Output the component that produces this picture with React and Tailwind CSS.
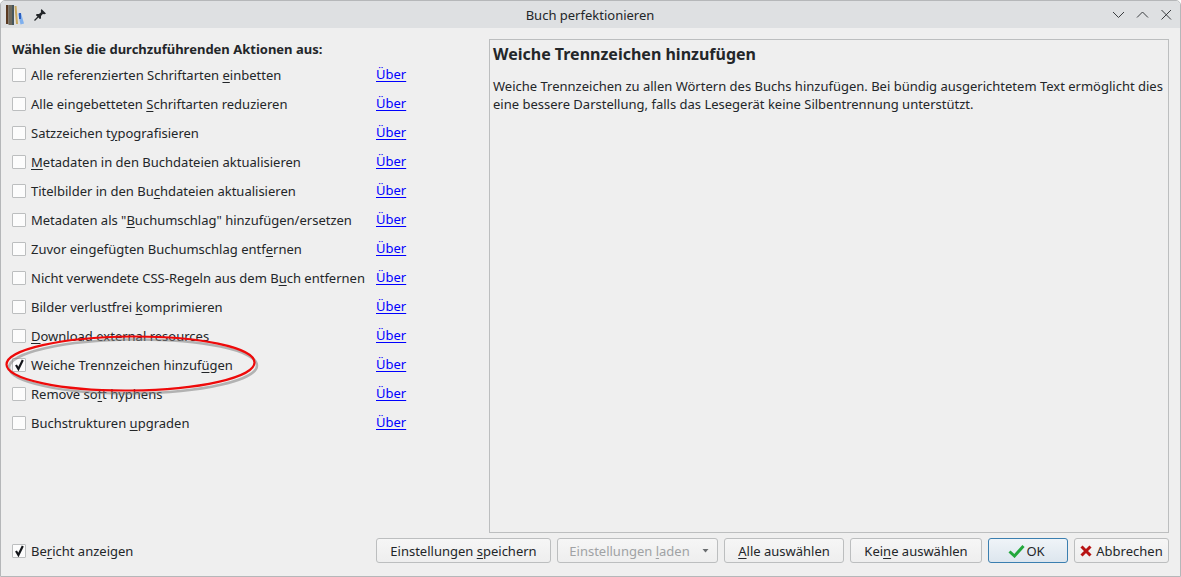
const aktionen = [
  ["Alle referenzierten Schriftarten ", "e", "inbetten"],
  ["Alle eingebetteten ", "S", "chriftarten reduzieren"],
  ["Satzzeichen t", "y", "pografisieren"],
  ["", "M", "etadaten in den Buchdateien aktualisieren"],
  ["Titelbilder in den Bu", "c", "hdateien aktualisieren"],
  ["Metadaten als \"", "B", "uchumschlag\" hinzufügen/ersetzen"],
  ["Zuvor eingefügten Buchumschlag entf", "e", "rnen"],
  ["Nicht verwendete CSS-Regeln aus dem B", "u", "ch entfernen"],
  ["Bilder verlustfrei ", "k", "omprimieren"],
  ["", "D", "ownload external resources"],
  ["Weiche Trennzeichen hinzuf", "ü", "gen", true],
  ["Remove so", "f", "t hyphens"],
  ["Buchstrukturen ", "u", "pgraden"],
];

function Mn({ a, k, b }) {
  return (
    <span>
      {a}
      <span className="underline underline-offset-2 decoration-1">{k}</span>
      {b}
    </span>
  );
}

function Check({ checked }) {
  return (
    <span className="flex h-[14px] w-[14px] shrink-0 items-center justify-center rounded-[1px] border border-[#bcbebf] bg-[#fcfcfc]">
      {checked && (
        <svg width="12" height="12" viewBox="0 0 12 12">
          <path d="M3 6 L5.4 10 L9.8 1" fill="none" stroke="#14161a" strokeWidth="2.2" />
        </svg>
      )}
    </span>
  );
}

function Btn({ children, className = "" }) {
  return (
    <div className={"flex h-[25px] items-center justify-center rounded-[3px] border border-[#bcbebf] bg-gradient-to-b from-[#f6f6f6] to-[#eeeeee] text-[#232629] " + className}>
      {children}
    </div>
  );
}

export default function App() {
  return (
    <div className="relative flex h-[577px] w-[1181px] flex-col overflow-hidden rounded-t-[5px] border border-[#b5b7b9] bg-[#efefef] font-['Noto_Sans',sans-serif] text-[13px] leading-[18px] text-[#232629]">
      <div className="flex h-[27px] shrink-0 items-center bg-[#dee0e2] pl-[4px] pr-[4px]">
        <svg width="20" height="24" viewBox="0 0 20 24">
          <rect x="1" y="2" width="2.5" height="19" fill="#5a3a22" />
          <rect x="3.5" y="2" width="3.5" height="20" fill="#6e6a5e" />
          <rect x="7" y="2" width="2" height="20" fill="#47565c" />
          <path d="M9.5 3 L11.5 3 L13 21 L11 21 Z" fill="#c9a860" />
          <path d="M13 10.5 L16 10 L19 20.5 L15.5 21.5 Z" fill="#7fb0ee" />
          <rect x="14" y="10" width="2" height="6" fill="#2c5fc0" />
        </svg>
        <svg className="ml-[8px]" width="14" height="14" viewBox="0 0 14 14">
          <path d="M8.5 1 L13 5.5 L11.5 6.2 L9.8 6 L8 8 L8 10.5 L6.8 11 L3 7.2 L3.5 6 L6 6 L8 4.2 L7.8 2.5 Z" fill="#232629" />
          <path d="M5 9 L1.5 12.5" stroke="#232629" strokeWidth="1.3" />
        </svg>
        <div className="flex-1 pl-[25px] text-center">Buch perfektionieren</div>
        <div className="flex items-center gap-[4px]">
          <svg width="20" height="20" viewBox="0 0 20 20"><path d="M5 7 L10.5 12.5 L16 7" fill="none" stroke="#3a3d40" /></svg>
          <svg width="20" height="20" viewBox="0 0 20 20"><path d="M5 12.5 L10.5 7 L16 12.5" fill="none" stroke="#3a3d40" /></svg>
          <svg width="20" height="20" viewBox="0 0 20 20"><path d="M5.5 5 L15 14.5 M15 5 L5.5 14.5" fill="none" stroke="#3a3d40" /></svg>
        </div>
      </div>

      <div className="flex min-h-0 flex-1 pl-[11px] pr-[11px] pt-[11px]">
        <div className="w-[477px] shrink-0">
          <div className="mt-[1px] font-bold leading-[18px]">Wählen Sie die durchzuführenden Aktionen aus:</div>
          <div className="mt-[2px] flex flex-col">
            {aktionen.map(([a, k, b, checked]) => (
              <div key={a + k + b} className="flex h-[29px] items-center">
                <Check checked={checked} />
                <span className="ml-[5px] w-[345px]"><Mn a={a} k={k} b={b} /></span>
                <span className="-mt-[2px] text-[#0000ff] underline underline-offset-2 decoration-1">Über</span>
              </div>
            ))}
          </div>
        </div>
        <div className="h-[494px] flex-1 border border-[#bcbebf] px-[3px] pt-[3px]">
          <div className="text-[16px] font-bold leading-[22px]">Weiche Trennzeichen hinzufügen</div>
          <p className="mt-[12px] leading-[18px]">
            Weiche Trennzeichen zu allen Wörtern des Buchs hinzufügen. Bei bündig ausgerichtetem Text ermöglicht dies eine bessere Darstellung, falls das Lesegerät keine Silbentrennung unterstützt.
          </p>
        </div>
      </div>

      <div className="flex h-[44px] shrink-0 items-start pl-[11px] pr-[11px] pt-[6px]">
        <div className="flex h-[25px] items-center">
          <Check checked />
          <span className="ml-[5px]"><Mn a="Be" k="r" b="icht anzeigen" /></span>
        </div>
        <div className="ml-auto flex gap-[6px]">
          <Btn className="w-[175px]"><Mn a="Einstellungen " k="s" b="peichern" /></Btn>
          <Btn className="w-[161px] !text-[#a0a2a4]">
            <span className="ml-[3px]"><Mn a="Einstellungen " k="l" b="aden" /></span>
            <svg className="ml-[12px]" width="7" height="4" viewBox="0 0 7 4"><path d="M0.5 0 L6.5 0 L3.5 3.5 Z" fill="#6a6d70" /></svg>
          </Btn>
          <Btn className="w-[120px]"><Mn a="" k="A" b="lle auswählen" /></Btn>
          <Btn className="w-[132px]"><Mn a="Kei" k="n" b="e auswählen" /></Btn>
          <Btn className="w-[80px] pr-[3px] !border-[#3b7fb0] !from-[#eff4f8] !to-[#dde6ee]">
            <svg width="17" height="14" viewBox="0 0 17 14"><path d="M1.5 7.5 L6.5 12 L15.5 2" fill="none" stroke="#22a83c" strokeWidth="3" /></svg>
            <span className="ml-[1px]">OK</span>
          </Btn>
          <Btn className="w-[95px]">
            <svg width="12" height="12" viewBox="0 0 12 12"><path d="M1.5 1.5 L10.5 10.5 M10.5 1.5 L1.5 10.5" fill="none" stroke="#b81414" strokeWidth="3" /></svg>
            <span className="ml-[4px]">Abbrechen</span>
          </Btn>
        </div>
      </div>

      <svg className="pointer-events-none absolute left-[2px] top-[332px]" width="262" height="66" viewBox="0 0 262 66">
        <ellipse cx="130" cy="33.5" rx="124" ry="27" transform="rotate(-0.5 130 33.5)" fill="none" stroke="#808080" strokeOpacity="0.55" strokeWidth="2.5" />
        <ellipse cx="127.5" cy="30.5" rx="124" ry="27" transform="rotate(-0.5 127.5 30.5)" fill="none" stroke="#ee0a0a" strokeWidth="2.2" />
      </svg>
    </div>
  );
}
